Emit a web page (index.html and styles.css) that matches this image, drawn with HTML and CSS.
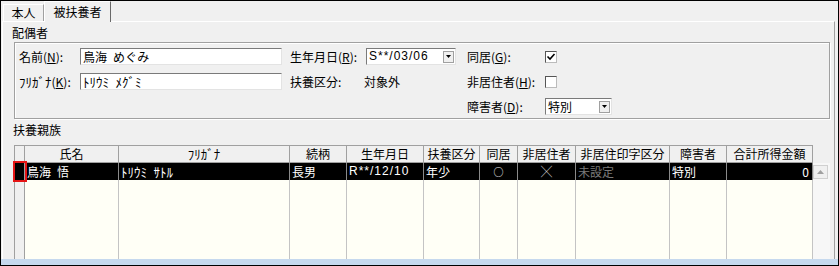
FILE: index.html
```html
<!DOCTYPE html>
<html lang="ja">
<head>
    <meta charset="UTF-8">
    <title>被扶養者</title>
    <link rel="stylesheet" href="styles.css">
</head>
<body>
<div class="window">
    <div class="tab-strip">
        <div class="tab">本人</div>
        <div class="tab active">被扶養者</div>
    </div>

    <div class="tab-panel">
        <div class="section-label">配偶者</div>
        <div class="group-box">
            <div class="form-grid">
                <!-- row 1 -->
                <span class="field-label">名前(<u>N</u>):</span>
                <div class="textbox">鳥海&ensp;めぐみ</div>
                <span></span>
                <span class="field-label">生年月日(<u>R</u>):</span>
                <div class="combo date">
                    <span class="combo-text latin">S**/03/06</span>
                    <span class="combo-button">
                        <svg width="5" height="3" viewBox="0 0 5 3"><path d="M0 0h5L2.5 3z" fill="#000"/></svg>
                    </span>
                </div>
                <span></span>
                <span class="field-label">同居(<u>G</u>):</span>
                <span class="checkbox">
                    <svg width="10" height="10" viewBox="0 0 10 10"><path d="M1.5 4.5l2.5 2.5 4.5-5" fill="none" stroke="#000" stroke-width="1.6"/></svg>
                </span>

                <!-- row 2 -->
                <span class="field-label"><span class="hw">ﾌﾘｶﾞﾅ</span>(<u>K</u>):</span>
                <div class="textbox"><span class="hw">ﾄﾘｳﾐ&ensp;ﾒｸﾞﾐ</span></div>
                <span></span>
                <span class="field-label">扶養区分:</span>
                <span class="field-value">対象外</span>
                <span></span>
                <span class="field-label">非居住者(<u>H</u>):</span>
                <span class="checkbox"></span>

                <!-- row 3 -->
                <span class="field-label row3">障害者(<u>D</u>):</span>
                <div class="combo small">
                    <span class="combo-text">特別</span>
                    <span class="combo-button">
                        <svg width="5" height="3" viewBox="0 0 5 3"><path d="M0 0h5L2.5 3z" fill="#000"/></svg>
                    </span>
                </div>
            </div>
        </div>

        <div class="section-label second">扶養親族</div>
        <div class="list-area">
            <div class="list">
                <div class="hd"></div>
                <div class="hd">氏名</div>
                <div class="hd"><span class="hw">ﾌﾘｶﾞﾅ</span></div>
                <div class="hd">続柄</div>
                <div class="hd">生年月日</div>
                <div class="hd">扶養区分</div>
                <div class="hd">同居</div>
                <div class="hd">非居住者</div>
                <div class="hd">非居住印字区分</div>
                <div class="hd">障害者</div>
                <div class="hd">合計所得金額</div>

                <div class="cell row-head current"></div>
                <div class="cell sel">鳥海&ensp;悟</div>
                <div class="cell sel"><span class="hw">ﾄﾘｳﾐ&ensp;ｻﾄﾙ</span></div>
                <div class="cell sel">長男</div>
                <div class="cell sel latin">R**/12/10</div>
                <div class="cell sel">年少</div>
                <div class="cell sel center circle">○</div>
                <div class="cell sel center mark">╳</div>
                <div class="cell sel dim">未設定</div>
                <div class="cell sel">特別</div>
                <div class="cell sel right">0</div>

                <div class="cell row-head"></div>
                <div class="cell"></div>
                <div class="cell"></div>
                <div class="cell"></div>
                <div class="cell"></div>
                <div class="cell"></div>
                <div class="cell"></div>
                <div class="cell"></div>
                <div class="cell"></div>
                <div class="cell"></div>
                <div class="cell"></div>
            </div>
            <div class="vscroll">
                <div class="vscroll-corner"></div>
                <div class="vscroll-button">
                    <svg width="7" height="4" viewBox="0 0 7 4"><path d="M0 4L3.5 0 7 4z" fill="#a0a0a0"/></svg>
                </div>
            </div>
        </div>
    </div>

    <div class="status-band"></div>
</div>
</body>
</html>
```

FILE: styles.css
```css
body {
    margin: 0;
    font-family: "Noto Sans CJK JP", sans-serif;
    font-size: 12px;
    color: #000;
}

.window {
    width: 839px;
    height: 266px;
    box-sizing: border-box;
    border: 1px solid #000;
    background: #f0f0f0;
    display: flex;
    flex-direction: column;
    overflow: hidden;
}

/* tabs */

.tab-strip {
    height: 20px;
    display: flex;
    align-items: flex-end;
    padding-left: 2px;
}

.tab {
    width: 41px;
    height: 17px;
    box-sizing: border-box;
    border-top: 1px solid #fff;
    border-left: 1px solid #fff;
    border-right: 1px solid #a0a0a0;
    text-align: center;
    line-height: 15px;
}

.tab.active {
    width: 67px;
    height: 21px;
    margin-bottom: -1px;
    position: relative;
    z-index: 1;
    background: #f0f0f0;
    border-right: 1px solid #696969;
    line-height: 19px;
}

.tab-panel {
    flex: 1;
    min-height: 0;
    margin: 0 3px 0 1px;
    border-top: 1px solid #fff;
    border-left: 1px solid #fff;
    border-right: 1px solid #a0a0a0;
    padding: 4px 4px 0 11px;
    display: flex;
    flex-direction: column;
    overflow: hidden;
}

.section-label {
    height: 14px;
    line-height: 14px;
    margin-left: -2px;
}

.section-label.second {
    margin-top: 4px;
    margin-left: -1px;
}

/* half-width katakana */
.hw {
    display: inline-block;
    font-size: 13px;
    line-height: 14px;
}

/* spouse group */

.group-box {
    margin-top: 2px;
    height: 77px;
    box-sizing: border-box;
    border: 1px solid #a0a0a0;
    box-shadow: inset 1px 1px 0 #fff, 1px 1px 0 #fff;
    padding: 5px 0 0 4px;
}

.form-grid {
    display: grid;
    grid-template-columns: 61px 202px 8px 76px 90px 11px 78px auto;
    grid-template-rows: 17px 17px 17px;
    row-gap: 8px;
    align-items: center;
}

.field-label,
.field-value {
    line-height: 17px;
    white-space: nowrap;
}

.field-value {
    margin-left: -2px;
}

.field-label.row3 {
    grid-column: 7;
}

.textbox,
.combo {
    height: 17px;
    box-sizing: border-box;
    background: #fff;
    border: 1px solid;
    border-color: #7a7a7a #e3e3e3 #e3e3e3 #7a7a7a;
    line-height: 15px;
    padding-left: 2px;
    white-space: nowrap;
}

.combo {
    display: flex;
    align-items: center;
    padding-right: 1px;
}

.combo-text {
    flex: 1;
}

.combo.small {
    width: 67px;
}

.combo-button {
    width: 11px;
    height: 12px;
    box-sizing: border-box;
    border: 1px solid #a0a0a0;
    background: #f0f0f0;
    display: flex;
    align-items: center;
    justify-content: center;
}

.latin {
    font-family: "Liberation Sans", sans-serif;
    font-size: 12px;
    letter-spacing: 1px;
}

.checkbox {
    width: 12px;
    height: 12px;
    box-sizing: border-box;
    border: 1px solid;
    border-color: #555 #bbb #bbb #555;
    background: #fff;
    display: flex;
    align-items: center;
    justify-content: center;
}

/* dependants list */

.list-area {
    margin-top: 8px;
    flex: 1;
    min-height: 0;
    display: flex;
}

.list {
    width: 799px;
    box-sizing: border-box;
    display: grid;
    grid-template-columns: 10px 94px 171px 57px 77px 56px 38px 58px 94px 57px 86px;
    grid-template-rows: 17px 17px 1fr;
    border-left: 1px solid #a0a0a0;
    border-top: 1px solid #a0a0a0;
    background: #fffff6;
}

.hd {
    box-sizing: border-box;
    background: #f0f0f0;
    border-right: 1px solid #a0a0a0;
    border-bottom: 1px solid #a0a0a0;
    text-align: center;
    line-height: 16px;
    white-space: nowrap;
}

.cell {
    box-sizing: border-box;
    border-right: 1px solid #c4c4c4;
    padding: 0 2px;
    line-height: 17px;
    white-space: nowrap;
}

.cell.row-head {
    background: #f0f0f0;
    border-right-color: #a0a0a0;
    padding: 0;
}

.cell.row-head.current {
    background: #000;
    outline: 2px solid #e51515;
    position: relative;
    z-index: 1;
}

.cell.sel {
    background: #000;
    color: #fff;
    border-right-color: #8a8a8a;
}

.cell.center {
    text-align: center;
}

.cell.right {
    text-align: right;
    padding-right: 3px;
}

.cell.circle {
    font-size: 10px;
}

.cell.mark {
    font-size: 11px;
}

.cell.dim {
    color: #7a7a7a;
}

.vscroll {
    width: 17px;
    display: flex;
    flex-direction: column;
    background: #f7f7f7;
}

.vscroll-corner {
    height: 18px;
    background: #f0f0f0;
}

.vscroll-button {
    width: 15px;
    height: 14px;
    margin-top: 2px;
    box-sizing: border-box;
    border: 1px solid #d0d0d0;
    background: #f0f0f0;
    display: flex;
    align-items: center;
    justify-content: center;
}

.status-band {
    height: 6px;
    background: #c6d9ee;
}
```
